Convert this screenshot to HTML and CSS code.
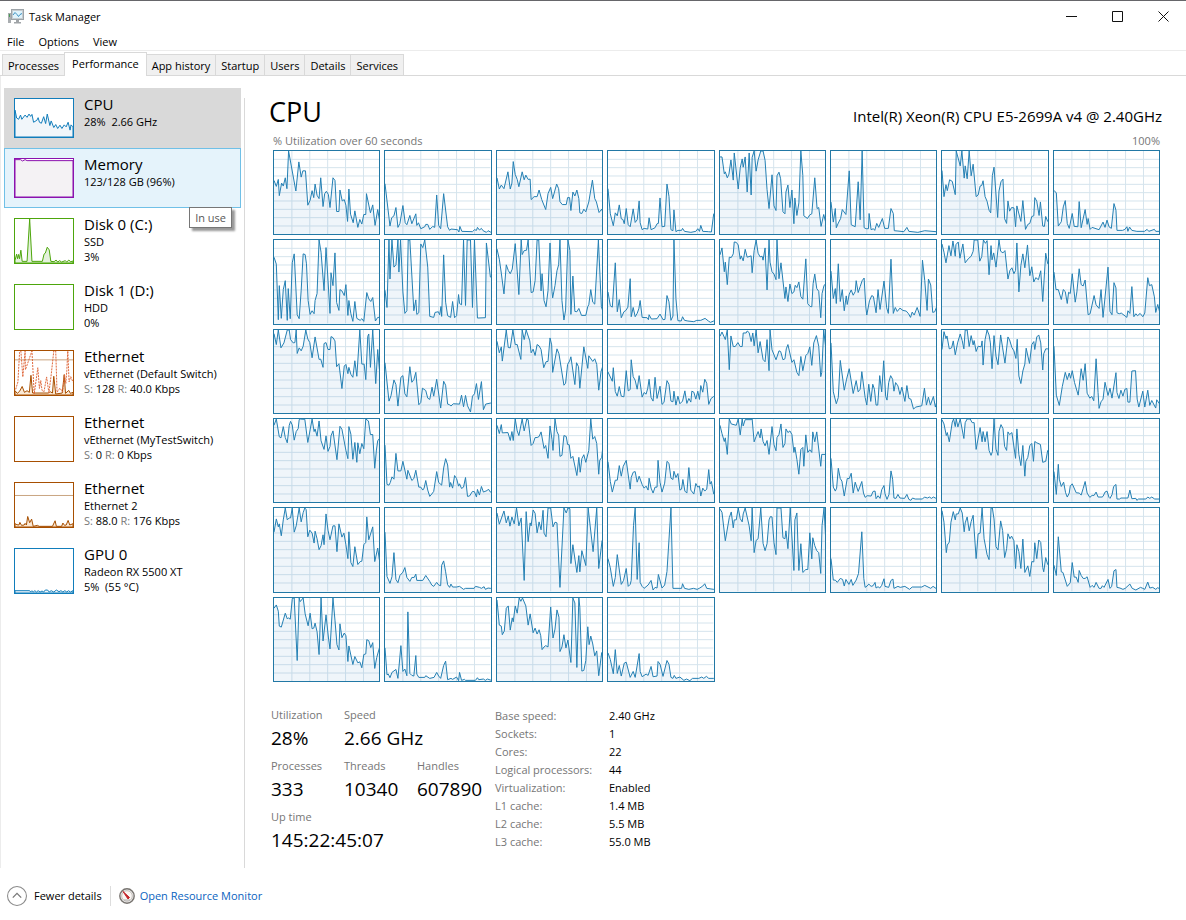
FILE: index.html
```html
<!DOCTYPE html>
<html lang="en">
<head>
<meta charset="utf-8">
<title>Task Manager</title>
<link rel="stylesheet" href="styles.css">
</head>
<body>
<div class="window">
  <header class="titlebar">
    <svg class="app-icon" viewBox="0 0 16 15" aria-hidden="true">
      <rect x="0" y="4" width="3" height="10" fill="#a9adb0"/><rect x="1" y="5" width="1" height="3" fill="#4c9a58"/>
      <rect x="3.5" y=".5" width="12" height="10" fill="#c7ccd0" stroke="#9ca3a8"/>
      <rect x="5" y="2" width="9" height="7" fill="#dff3fc"/>
      <path d="M5 6l2-2.500 2 2 1.500 2L12 5.500l2-1" fill="none" stroke="#3b8fc0"/>
      <path d="M8 11h3v2h2v1.500H6V13h2z" fill="#a0a4a7"/>
    </svg>
    <h1 class="app-title">Task Manager</h1>
    <div class="window-buttons">
      <button class="window-button" aria-label="Minimize"><svg viewBox="0 0 11 11"><path d="M0 5.500h11"/></svg></button>
      <button class="window-button" aria-label="Maximize"><svg viewBox="0 0 11 11"><path d="M.5.5h10v10H.5z"/></svg></button>
      <button class="window-button" aria-label="Close"><svg viewBox="0 0 11 11"><path d="M.5.5l10 10M10.500.5l-10 10"/></svg></button>
    </div>
  </header>
  <nav class="menubar" aria-label="Menu">
    <button class="menu">File</button><button class="menu">Options</button><button class="menu">View</button>
  </nav>
  <div class="tabs" role="tablist">
    <button class="tab" role="tab">Processes</button>
    <button class="tab tab-active" role="tab" aria-selected="true">Performance</button>
    <button class="tab" role="tab">App history</button>
    <button class="tab" role="tab">Startup</button>
    <button class="tab" role="tab">Users</button>
    <button class="tab" role="tab">Details</button>
    <button class="tab" role="tab">Services</button>
  </div>
  <div class="content">
    <nav class="sidebar" aria-label="Resources">
      <button class="resource resource-selected">
        <svg class="thumb cpu" viewBox="43 41 178 116" preserveAspectRatio="none"><path class="area" d="M43 157V75L48 99 54 103 60 90 64 103 74 90 80 97 86 87 91 94 95 88 100 112 110 106 114 98 118 112 124 115 131 95 137 116 142 87 150 122 154 108 162 128 168 119 174 131 181 121 187 131 194 120 200 126 206 112 212 136 215 120 221 126V157Z"/></svg>
        <span class="resource-text"><span class="resource-name">CPU</span><span class="resource-line">28%&nbsp; 2.66 GHz</span></span>
      </button>
      <button class="resource resource-hover">
        <svg class="thumb memory" viewBox="43 221 178 116" preserveAspectRatio="none"><path class="area" d="M43 337V223H60L66 227 74 223 80 226H221V337Z"/></svg>
        <span class="resource-text"><span class="resource-name">Memory</span><span class="resource-line">123/128 GB (96%)</span></span>
        <span class="tooltip" role="tooltip">In use</span>
      </button>
      <button class="resource">
        <svg class="thumb tall disk" viewBox="43 401 178 134" preserveAspectRatio="none"><path class="area" d="M43 535V527L48 508 51 522 54 509 57 522 61 496 65 530H80L88 401 95 530H127L132 508 136 505 142 487 148 495 153 530 163 531 169 526 174 532 180 528 186 532 197 528 202 532 208 526 214 531 221 529V535Z"/></svg>
        <span class="resource-text"><span class="resource-name">Disk 0 (C:)</span><span class="resource-line">SSD</span><span class="resource-line">3%</span></span>
      </button>
      <button class="resource">
        <svg class="thumb tall disk" viewBox="0 0 60 46"></svg>
        <span class="resource-text"><span class="resource-name">Disk 1 (D:)</span><span class="resource-line">HDD</span><span class="resource-line">0%</span></span>
      </button>
      <button class="resource">
        <svg class="thumb tall net" viewBox="43 31 178 134" preserveAspectRatio="none"><path class="limit" d="M43 58H221"/><path class="area" d="M43 165V152L50 160 57 154 65 139 72 157 80 152 87 157 92 105 97 159H145L151 155 158 159 162 108 168 162 188 159 194 103 198 160 208 151 213 160 221 157V165Z"/><path class="dotted" d="M45 148L52 125 57 35 61 31 67 110 74 31 75 88 95 31 102 162 113 82 118 145 122 121 126 151 132 155 140 110 147 158 154 104 162 31 168 31 172 157 181 144 189 156 195 103 199 130 202 90 205 31 209 125 214 109 221 126"/></svg>
        <span class="resource-text"><span class="resource-name">Ethernet</span><span class="resource-line">vEthernet (Default Switch)</span><span class="resource-line"><i>S:</i> 128 <i>R:</i> 40.0 Kbps</span></span>
      </button>
      <button class="resource">
        <svg class="thumb tall net" viewBox="0 0 60 46"></svg>
        <span class="resource-text"><span class="resource-name">Ethernet</span><span class="resource-line">vEthernet (MyTestSwitch)</span><span class="resource-line"><i>S:</i> 0 <i>R:</i> 0 Kbps</span></span>
      </button>
      <button class="resource">
        <svg class="thumb tall net" viewBox="43 428 178 134" preserveAspectRatio="none"><path class="limit" d="M43 466H221"/><path class="area" d="M43 562V552L49 555 55 556 58 548 63 557 71 556 74 551 78 556 82 530 88 549 94 538 99 560 112 557 117 560H158L166 543 170 560 186 560 190 550 195 557 200 556 206 542 211 556 221 552V562Z"/></svg>
        <span class="resource-text"><span class="resource-name">Ethernet</span><span class="resource-line">Ethernet 2</span><span class="resource-line"><i>S:</i> 88.0 <i>R:</i> 176 Kbps</span></span>
      </button>
      <button class="resource">
        <svg class="thumb tall gpu" viewBox="43 626 178 134" preserveAspectRatio="none"><path class="area" d="M43 760V753H88L91 757 95 753 99 757 104 753 109 757 114 753 120 757 126 754 131 757 136 751 143 751 148 757 154 753 162 757 170 751 178 756 184 753 190 757 196 753 202 757 207 753 213 757 221 753V760Z"/></svg>
        <span class="resource-text"><span class="resource-name">GPU 0</span><span class="resource-line">Radeon RX 5500 XT</span><span class="resource-line">5%&nbsp; (55 °C)</span></span>
      </button>
    </nav>
    <main class="panel">
      <div class="panel-head"><h2 class="panel-title">CPU</h2><span class="cpu-model">Intel(R) Xeon(R) CPU E5-2699A v4 @ 2.40GHz</span></div>
      <div class="chart-caption"><span>% Utilization over 60 seconds</span><span>100%</span></div>
      <div class="chart-grid" id="charts"></div>
      <div class="stats">
        <dl class="live">
          <div><dt>Utilization</dt><dd>28%</dd></div>
          <div class="wide"><dt>Speed</dt><dd>2.66 GHz</dd></div>
          <div><dt>Processes</dt><dd>333</dd></div>
          <div><dt>Threads</dt><dd>10340</dd></div>
          <div><dt>Handles</dt><dd>607890</dd></div>
          <div class="full"><dt>Up time</dt><dd>145:22:45:07</dd></div>
        </dl>
        <table class="specs">
          <tr><th scope="row">Base speed:</th><td>2.40 GHz</td></tr>
          <tr><th scope="row">Sockets:</th><td>1</td></tr>
          <tr><th scope="row">Cores:</th><td>22</td></tr>
          <tr><th scope="row">Logical processors:</th><td>44</td></tr>
          <tr><th scope="row">Virtualization:</th><td>Enabled</td></tr>
          <tr><th scope="row">L1 cache:</th><td>1.4 MB</td></tr>
          <tr><th scope="row">L2 cache:</th><td>5.5 MB</td></tr>
          <tr><th scope="row">L3 cache:</th><td>55.0 MB</td></tr>
        </table>
      </div>
    </main>
  </div>
  <footer class="footer">
    <button class="fewer">
      <svg viewBox="0 0 19 19" aria-hidden="true"><circle cx="9.500" cy="9.500" r="9" fill="none" stroke="#8a8a8a"/><path d="M5.500 11l4-4 4 4" fill="none" stroke="#777" stroke-width="1.200"/></svg>
      Fewer details
    </button>
    <a class="monitor" href="#">
      <svg viewBox="0 0 16 16" aria-hidden="true"><circle cx="8" cy="8" r="7.200" fill="#eee" stroke="#77736f" stroke-width="1.400"/><circle cx="8" cy="8" r="5.300" fill="#faf7f5" stroke="#b9b2ad" stroke-width=".8"/><path d="M4 3.500l6.500 6-1.500 1.500z" fill="#c3252b" stroke="#c3252b"/><path d="M5 12h6" stroke="#aaa"/></svg>
      Open Resource Monitor
    </a>
  </footer>
</div>
<script src="charts.js"></script>
</body>
</html>
```

FILE: styles.css
```css
* { box-sizing: border-box; }
body { margin: 0; background: #fff; color: #000; font: 11px/15px "Open Sans", "Noto Sans", sans-serif; }
button { font: inherit; color: inherit; background: none; border: 0; padding: 0; margin: 0; text-align: left; }
h1, h2, dl, dd { margin: 0; font-weight: 400; }
i { font-style: normal; color: #777; }

.window { height: 100vh; min-height: 700px; display: flex; flex-direction: column; border-top: 1px solid #66666a; }
.titlebar { display: flex; align-items: center; height: 30px; padding-left: 8px; }
.app-icon { width: 16px; height: 15px; margin-right: 5px; }
.app-title { font-size: 11px; }
.window-buttons { margin-left: auto; display: flex; }
.window-button { width: 46px; height: 28px; display: flex; align-items: center; justify-content: center; }
.window-button svg { width: 11px; height: 11px; fill: none; stroke: #111; }
.menubar { display: flex; gap: 14px; height: 20px; padding: 1px 7px 0; border-bottom: 1px solid #ececec; }
.tabs { display: flex; align-items: flex-end; height: 25px; padding-left: 2px; border-bottom: 1px solid #d9d9d9; }
.tab { height: 21px; padding: 0 5px; background: #f0f0f0; border: 1px solid #d9d9d9; border-left-width: 0; border-bottom: 0; white-space: nowrap; }
.tab:first-child { border-left-width: 1px; border-right: 0; }
.tab-active { height: 24px; margin-bottom: -1px; padding: 0 7px 3px; background: #fff; border-left-width: 1px; }

.content { flex: 1; min-height: 0; display: flex; border-left: 1px solid #ececec; }
.sidebar { flex: 0 0 243px; padding: 12px 3px 0; display: flex; flex-direction: column; }
.resource { position: relative; flex: none; display: flex; align-items: flex-start; gap: 10px; min-height: 60px; padding: 9px 0 3px 9px; border: 1px solid transparent; }
.resource-selected { background: #d9d9d9; }
.resource-hover { background: #e5f3fb; border-color: #70c0e7; }
.thumb { width: 60px; height: 40px; flex: none; background: #fff; border: 1px solid #117dbb; overflow: hidden; }
.thumb.tall { height: 46px; margin-bottom: 6px; }
.thumb path { stroke-width: 1px; vector-effect: non-scaling-stroke; fill: none; }
.cpu .area, .gpu .area { stroke: #117dbb; fill: #f1f6fa; }
.memory { border-color: #8b12ae; }
.memory .area { stroke: #8b12ae; fill: #f4f2f4; }
.disk { border-color: #4da60c; }
.disk .area { stroke: #4da60c; fill: #e4f1dc; }
.net { border-color: #a74f01; }
.net .area { stroke: #a74f01; fill: #fbe9d5; }
.net .limit { stroke: #c9a581; }
.net .dotted { stroke: #e0683c; stroke-dasharray: 2 1; }
.resource-text { display: flex; flex-direction: column; white-space: nowrap; }
.resource-name { font-size: 15px; line-height: 16px; margin: -2px 0 2px; }
.tooltip { position: absolute; z-index: 1; right: 8px; top: 58px; padding: 2px 5px; border: 1px solid #767676; background: #fff; color: #575757; box-shadow: 3px 3px 2px #999; }

.panel { flex: 1; min-width: 0; display: flex; flex-direction: column; margin-top: 22px; padding: 0 26px 0 28px; border-left: 1px solid #d9d9d9; }
.panel-head { display: flex; justify-content: space-between; align-items: baseline; margin: -5px -2px 0 -4px; white-space: nowrap; }
.panel-title { font-size: 27px; line-height: 38px; }
.cpu-model { font-size: 15px; }
.chart-caption { display: flex; justify-content: space-between; margin: 2px 0; color: #767676; }
.chart-grid { flex: 1; min-height: 0; display: grid; grid-template-columns: repeat(8, minmax(0, 1fr)); grid-template-rows: repeat(6, minmax(0, 1fr)); gap: 4px; }
.chart { width: 100%; height: 100%; display: block; border: 1px solid #2278a5; }
.chart path { vector-effect: non-scaling-stroke; fill: none; stroke-width: 1px; }
.chart .rule { stroke: #d5e4ed; }
.chart .load { stroke: #2480b4; fill: rgba(17, 110, 187, .065); }

.stats { display: flex; flex: none; gap: 14px; padding-top: 23px; min-height: 186px; }
.live { width: 210px; margin-left: -2px; display: grid; grid-template-columns: 73px 73px 1fr; grid-auto-rows: 51px; align-content: start; white-space: nowrap; }
.wide { grid-column: span 2; }
.full { grid-column: span 3; }
.live dt { line-height: 20px; color: #767676; }
.live dd { font-size: 19px; line-height: 26px; }
.specs { border-collapse: collapse; align-self: flex-start; white-space: nowrap; margin-top: 1px; }
.specs th, .specs td { padding: 0; height: 18px; font-weight: 400; text-align: left; }
.specs th { width: 114px; color: #767676; }

.footer { flex: none; display: flex; align-items: center; height: 52px; padding: 3px 7px 0; }
.fewer { display: flex; align-items: center; gap: 7px; padding-right: 8px; border-right: 1px solid #ddd; white-space: nowrap; }
.fewer svg { width: 20px; height: 20px; }
.monitor { display: flex; align-items: center; gap: 5px; margin-left: 8px; color: #0a63c0; text-decoration: none; white-space: nowrap; }
.monitor svg { width: 16px; height: 16px; }
```

FILE: charts.js
```js
// One entry per logical processor: left edge, top edge, load trace (318 x 252 units).
const processors = [
  [25,181,"25,270 32,288 38,267 41,316 48,278 53,287 59,262 64,295 69,181 91,302 100,214 107,260 112,241 120,241 127,345 134,330 140,301 145,322 149,281 155,315 161,325 166,262 173,349 178,310 183,303 189,312 194,352 203,262 209,270 214,364 221,364 224,299 231,332 237,328 242,345 247,394 251,296 256,372 264,398 269,362 278,412 284,388 290,402 296,373 302,373 304,310 316,368 323,344 330,406 338,358 343,388"],
  [359,181,"359,280 374,408 379,383 386,377 392,352 398,412 404,400 413,346 420,398 425,404 434,376 440,401 452,371 455,406 460,398 467,416 479,410 482,403 488,403 494,418 503,409 509,412 515,314 521,406 527,416 536,310 548,410 554,421 558,417 578,419 582,426 585,409 591,424 623,425 629,419 635,421 638,412 644,420 650,415 655,422 665,427 670,422 677,426"],
  [691,181,"691,262 698,296 704,284 712,295 724,244 731,296 736,278 740,213 746,252 752,267 757,289 767,244 773,268 778,254 785,267 791,266 794,328 803,319 812,319 818,299 826,328 838,358 845,310 853,291 859,325 871,281 877,295 881,334 888,343 900,343 904,322 910,322 914,361 920,305 926,317 932,299 938,325 941,368 947,370 953,357 959,365 968,335 979,269 986,325 991,335 999,367 1007,357 1012,370"],
  [127,46,"127,160 134,236 143,272 149,233 155,242 161,209 167,251 172,253 176,266 182,220 188,269 194,275 203,221 209,262 215,254 221,197 224,263 230,284 236,280 247,282 251,248 257,284 269,278 275,266 279,265 284,188 290,275 298,274 305,146 311,183 317,284 323,287 326,224 332,290 338,286 349,286 352,280 358,289 377,292 392,289 398,281 403,289 407,271 413,289 430,290 439,291 446,236"],
  [460,46,"460,64 466,64 473,115 476,109 482,127 487,116 493,73 500,134 503,52 515,161 521,97 527,70 530,95 536,64 542,170 548,52 554,179 557,65 563,46 569,107 575,73 583,46 590,46 596,74 602,163 608,220 617,118 623,212 629,226 632,121 638,110 643,130 650,230 656,236 659,170 665,149 671,217 677,164 683,266 686,188 692,241 698,203 704,46 710,120 713,242 724,250 731,239 737,236 746,127 753,220 758,217 765,274 773,238 779,262"],
  [793,46,"793,200 800,261 806,220 809,278 815,264 822,250 827,223 838,238 848,106 854,269 866,275 875,139 881,254 887,46 893,278 899,281 906,281 908,235 914,284 921,281 925,286 931,265 937,277 948,250 955,280 966,280 974,220 981,235 984,287 995,288 1013,290 1022,277 1028,289 1055,292 1076,287 1110,290"],
  [244,181,"244,240 250,319 256,283 260,301 267,268 275,273 284,313 287,181 299,226 304,181 311,263 314,226 320,265 326,181 332,256 338,221 347,319 353,314 359,287 364,285 368,271 374,319 380,333 386,360 391,368 396,255 401,230 412,382 416,302 422,274 428,266 433,386 439,400 443,332 448,363 454,352 461,353 466,410 470,347 482,394 488,331 496,418 503,403 509,400 515,379 521,377 524,322 530,333 537,376 541,335 548,408 553,409 557,379 563,394"],
  [577,181,"577,300 584,308 590,408 599,395 605,350 611,331 617,400 623,415 632,370 638,409 649,410 653,334 659,413 671,358 677,403 680,385 686,418 692,412 713,419 725,396 731,412 737,390 743,410 750,415 758,340 764,360 767,421 784,421 791,418 797,410 800,424 805,411 812,421 827,424 850,424 858,418 863,424 880,418 884,424 899,424"],
  [25,448,"25,500 32,521 38,689 41,586 47,685 53,598 59,571 65,691 68,595 74,686 80,517 86,490 95,674 101,686 107,600 113,490 119,492 123,520 128,631 134,673 140,662 146,671 149,631 155,610 161,448 167,485 176,601 182,471 194,670 197,547 203,586 209,487 214,637 221,661 224,598 230,602 237,616 242,583 248,676 251,631 257,671 263,694 269,634 275,685 285,691 290,686 296,694 305,607 311,626 317,634 323,622 331,693 338,682 343,682"],
  [359,448,"359,600 365,652 371,448 374,566 380,448 386,530 392,523 398,448 401,545 406,448 413,605 419,670 425,662 429,448 434,448 446,662 452,629 455,673 461,668 467,460 473,471 479,448 488,530 494,679 506,682 510,667 520,665 524,674 528,649 530,679 536,493 542,636 548,677 557,682 563,634 569,683 575,677 581,613 584,640 590,644 596,448 602,646 607,448 617,448 623,652 629,448 638,684 662,683 665,457 677,560"],
  [691,448,"691,475 698,506 704,548 712,611 719,523 725,540 731,550 737,536 746,459 757,613 764,448 767,492 773,480 780,479 785,448 794,607 800,605 806,571 812,448 817,448 824,602 827,550 833,631 839,650 845,601 851,457 857,604 859,623 866,586 872,541 877,523 881,448 887,631 893,690 898,660 905,448 911,480 914,673 920,557 926,664 932,665 938,655 946,676 959,676 965,649 968,644 974,598 980,636 986,642 997,448 1006,650 1012,668"],
  [127,313,"127,470 134,512 140,516 149,382 155,530 161,493 167,548 175,530 181,526 187,516 194,430 197,545 203,517 209,545 215,535 220,521 224,496 230,547 245,548 249,554 251,539 258,552 275,551 284,537 293,554 299,553 305,481 311,500 317,556 323,543 326,313 332,490 338,557 348,558 352,545 358,556 368,558 386,560 395,556 407,556 420,550 430,558 436,562 446,558"],
  [460,313,"460,358 466,337 473,409 476,380 482,448 488,365 494,366 500,355 503,319 509,320 515,328 521,371 524,361 530,376 536,341 542,365 554,361 557,412 563,345 569,313 575,353 581,364 587,362 590,374 596,337 602,464 608,313 611,380 617,409 623,416 629,433 632,313 638,430 644,382 656,490 659,455 665,499 671,446 677,475 683,470 687,450 692,457 698,440 704,484 710,492 719,370 725,506 732,514 737,515 741,445 746,416 752,460 758,468 764,548 768,475 774,450 779,446"],
  [793,313,"793,407 800,490 806,460 809,505 815,385 821,499 827,463 833,527 839,482 842,508 848,477 854,464 860,480 866,469 869,436 875,472 881,454 887,436 893,428 898,515 901,540 909,497 916,481 921,484 929,533 935,463 941,523 953,437 961,518 966,535 974,371 981,535 987,517 993,529 1001,519 1010,526 1020,528 1027,536 1033,547 1038,531 1044,540 1053,517 1062,544 1069,374 1076,436 1083,526 1087,431 1094,449 1100,532 1106,530 1113,512"],
  [244,448,"244,460 250,485 256,517 265,465 271,496 277,451 284,497 286,462 293,454 298,503 307,460 314,517 323,505 332,497 338,482 341,448 352,448 358,512 364,498 369,448 375,458 380,450 386,553 392,465 395,508 400,487 407,530 416,448 421,482 428,487 434,480 443,566 449,540 455,532 461,550 466,540 470,457 476,605 482,525 488,490 494,532 502,463 509,556 515,529 521,575 527,562 535,568 542,541 548,634 557,488 563,520"],
  [577,448,"577,545 583,598 590,598 599,628 605,598 611,604 617,640 621,606 626,610 632,550 641,636 646,605 653,535 659,583 665,587 671,569 680,674 686,671 698,616 704,644 713,655 719,598 725,682 740,530 746,664 752,674 758,577 764,593 767,668 774,671 780,669 797,682 800,662 806,670 812,589 818,680 824,671 829,677 837,670 845,680 851,669 860,562 865,586 872,583 880,620 884,667 890,643 896,666 899,658"],
  [25,11,"25,22 32,55 38,11 46,65 55,50 65,11 71,11 75,40 83,50 88,49 92,11 95,82 101,65 107,74 113,60 121,11 127,38 133,49 140,95 149,32 161,100 166,99 173,124 176,52 182,49 188,70 194,70 197,31 203,34 209,44 214,122 221,113 230,188 237,120 242,115 248,143 251,124 257,145 263,154 269,104 275,151 284,11 290,114 297,114 302,161 308,30 311,23 316,124 323,11 332,173 338,70 343,130"],
  [359,11,"359,110 371,226 377,210 386,162 392,176 398,241 407,154 413,149 419,204 425,213 434,122 440,169 446,161 452,139 461,237 467,230 472,187 482,194 488,217 494,221 501,184 506,211 515,160 527,247 536,166 542,178 548,235 554,237 558,241 565,234 584,235 590,208 596,243 602,209 608,240 617,259 623,211 629,204 635,173 641,221 650,167 656,252 663,235 677,232"],
  [691,11,"691,45 698,80 704,62 707,105 719,11 725,64 731,65 739,11 746,55 752,55 763,100 767,11 773,40 779,11 790,44 794,80 800,69 806,88 812,55 818,59 824,70 832,125 839,107 845,106 851,35 856,56 859,139 872,68 878,83 893,178 898,172 904,115 910,105 914,92 926,176 931,110 937,122 941,187 953,62 965,127 968,89 980,106 986,98 992,115 998,193 1005,136 1012,115"],
  [127,11,"127,138 140,166 143,125 149,197 155,211 161,182 167,211 175,213 182,134 188,195 194,191 197,101 203,152 209,163 215,190 221,149 230,214 236,200 242,205 247,187 251,160 257,215 263,226 269,154 275,218 284,181 290,236 296,230 305,164 311,175 317,226 323,228 326,196 332,238 338,211 344,234 352,226 359,195 365,233 371,218 377,229 380,196 386,199 392,220 398,196 403,221 407,179 413,199 419,160 425,172 431,236 438,218 446,212"],
  [460,11,"460,30 466,17 476,40 482,11 488,131 493,29 500,61 506,61 514,49 521,61 527,61 530,20 539,20 542,14 548,19 554,46 559,20 563,59 569,11 575,80 581,46 590,100 596,107 602,40 608,134 611,11 617,71 629,101 638,74 643,76 650,101 656,98 660,68 665,55 677,109 683,101 692,139 698,149 704,91 710,134 719,88 725,82 731,62 737,118 743,50 751,28 758,60 764,152 767,140 773,11 779,65"],
  [-92,11,"-92,50 -85,198 -76,234 -70,215 -64,103 -52,193 -45,160 -37,128 -25,203 -16,164 -10,198 -4,190 1,137 11,215 16,238 22,175 28,227 34,175 39,190 44,238 49,238 55,149 61,198 67,104 73,212 77,223 82,170 88,149 94,160 98,196 103,170 110,180 116,206 122,184 131,227 137,179 143,218 149,220 157,250 164,244 182,240 190,187 196,238 202,214 208,238 217,212 223,244 229,221"],
  [244,11,"244,70 250,16 256,37 259,29 266,68 273,65 278,44 284,86 291,50 299,23 305,43 310,68 314,11 320,11 326,61 332,28 338,56 341,43 347,76 353,60 362,62 365,44 368,117 374,40 380,11 386,26 390,50 395,128 401,28 407,90 413,116 421,26 427,65 434,111 443,32 448,41 455,64 461,74 467,97 471,39 476,150 482,173 488,135 494,114 498,66 508,112 515,55 521,46 524,70 530,32 536,26 542,50 548,132 551,83 557,68 563,68"],
  [577,11,"577,60 584,208 593,239 602,182 611,139 617,161 623,141 627,157 632,134 639,170 650,208 659,128 665,163 671,113 677,202 685,217 691,212 697,225 704,98 710,200 713,248 719,228 725,220 731,169 740,209 746,187 752,217 764,140 767,200 773,218 779,193 785,211 791,190 797,188 800,229 806,229 812,135 823,134 828,220 833,244 845,196 851,244 860,193 866,239 872,224 884,247 887,222 898,238"],
  [25,281,"25,300 32,281 41,335 46,338 53,304 59,337 65,353 71,300 75,288 80,299 86,345 92,319 98,310 101,283 104,281 118,282 127,352 134,314 140,281 146,319 149,311 155,333 161,287 167,347 176,373 182,332 188,379 194,364 197,332 203,317 215,404 224,303 230,312 242,376 248,401 251,304 257,327 263,403 269,352 275,412 278,353 284,386 290,355 296,371 302,281 310,287 316,328 323,328 329,430 334,375 338,347 343,340"],
  [359,281,"359,360 365,479 371,481 375,473 380,456 386,463 392,385 398,438 407,438 413,409 425,463 428,436 440,467 446,461 452,436 461,487 467,487 473,496 477,490 482,467 488,496 494,515 500,508 506,500 515,440 521,473 530,481 536,429 542,401 548,420 554,487 557,473 563,490 569,452 575,461 581,484 584,477 590,491 596,487 602,458 608,515 614,514 623,500 629,501 635,517 638,494 644,511 650,485 656,502 668,497 671,493 677,502"],
  [691,281,"691,300 698,325 704,298 707,323 724,322 731,346 736,319 740,346 746,281 752,317 757,331 767,281 773,317 781,281 785,283 794,361 800,355 806,337 812,337 818,334 824,320 833,370 838,361 845,400 851,302 857,343 860,376 866,281 872,319 877,330 881,394 887,391 893,331 900,334 904,358 909,359 914,400 920,394 932,452 938,397 942,442 947,401 953,389 959,412 968,376 974,281 980,342 986,334 992,355 998,448 1001,406 1007,397 1012,350"],
  [127,281,"127,410 134,470 140,502 149,466 155,466 161,422 167,454 173,424 182,406 194,493 197,458 203,442 209,440 215,472 221,454 230,479 236,490 242,484 248,496 251,460 257,490 263,505 269,487 275,487 278,406 284,472 290,502 298,475 305,409 311,415 317,460 323,464 326,439 332,458 338,446 344,496 349,493 353,464 359,499 365,505 371,428 377,496 386,508 392,476 398,487 403,484 407,514 413,490 419,499 425,493 431,434 435,478 439,470 446,508"],
  [460,281,"460,300 466,325 473,349 476,338 482,388 488,281 494,296 509,300 515,281 521,329 527,281 530,302 536,283 554,283 557,281 563,350 569,334 575,319 581,338 584,311 590,349 596,362 602,346 608,388 617,304 623,359 629,377 632,337 638,328 644,296 650,367 656,355 659,311 665,322 671,317 677,328 683,382 686,366 692,403 698,448 704,373 710,367 713,424 719,329 725,382 731,374 737,382 740,320 746,350 752,320 764,424 767,388 779,388"],
  [-92,281,"-92,400 -85,487 -79,499 -75,490 -70,430 -64,461 -59,469 -52,514 -43,461 -37,461 -31,445 -25,505 -19,472 -10,500 1,470 6,505 11,518 17,513 29,514 35,500 41,499 44,522 50,513 56,521 61,495 68,482 71,507 77,524 83,509 89,438 94,463 98,520 104,521 110,509 116,520 130,521 137,509 143,524 149,527 154,520 162,523 184,523 190,517 199,520 205,517 211,521 217,517 223,520 229,523"],
  [244,281,"244,283 250,296 257,331 260,322 266,350 275,290 279,281 284,304 287,281 292,305 299,281 310,340 314,292 320,281 329,281 335,292 341,292 347,373 359,307 365,350 368,319 374,350 380,319 386,376 392,391 396,380 401,281 407,372 413,391 416,318 422,298 428,310 433,364 439,376 443,320 448,328 455,322 466,400 470,311 476,388 482,422 488,361 494,454 497,409 503,397 509,361 515,355 520,409 524,349 530,353 541,358 548,412 557,409 563,376"],
  [577,281,"577,440 584,509 590,418 593,463 599,485 606,472 612,504 617,517 623,505 626,484 632,477 644,504 653,505 659,511 665,491 671,470 677,505 685,518 692,512 698,512 704,502 710,517 722,517 725,515 731,502 737,499 743,518 746,521 752,510 757,485 764,479 767,523 775,523 779,520 800,520 806,496 812,522 824,521 827,527 832,523 854,523 860,517 866,521 872,517 881,523 898,523"],
  [25,547,"25,620 32,580 38,604 41,595 47,631 53,583 59,547 65,583 71,577 75,577 80,547 86,620 92,601 101,547 107,589 113,561 118,547 122,552 127,634 133,614 140,623 146,653 149,617 155,640 161,673 167,661 173,628 176,658 182,565 188,614 194,643 203,601 209,601 215,679 221,595 230,635 236,623 242,658 248,700 251,619 257,712 263,724 269,664 278,718 285,709 290,708 296,658 302,651 305,574 311,643 323,604 329,709 338,668 343,704"],
  [359,547,"359,620 365,754 374,775 380,755 386,682 392,763 398,773 404,751 413,741 419,727 425,757 434,769 440,757 447,757 452,747 455,766 473,766 482,751 494,769 500,780 506,784 515,772 521,780 527,782 530,720 536,707 542,740 548,779 554,787 558,777 563,786 575,786 584,784 596,793 602,790 628,790 632,784 644,787 650,790 658,785 662,793 670,789 677,790"],
  [691,547,"691,562 698,596 712,556 719,592 725,571 730,602 736,574 743,595 750,547 757,601 764,577 773,766 779,558 785,649 791,592 794,601 800,553 806,563 812,622 818,589 824,613 830,554 833,623 839,634 845,547 853,547 860,604 866,590 872,592 881,787 893,547 900,562 905,547 911,549 914,715 920,658 932,742 938,691 941,740 947,676 959,721 966,547 981,679 992,547 998,730 1008,646 1012,655"],
  [127,547,"127,700 134,728 143,784 149,757 155,688 167,778 174,766 182,730 188,784 194,778 197,766 204,600 209,547 215,763 221,652 224,772 230,784 236,790 248,780 257,766 263,795 269,787 275,789 279,748 290,789 298,780 305,739 317,547 323,790 349,790 352,776 358,790 371,793 385,790 396,793 404,789 413,783 419,776 425,790 446,793"],
  [460,547,"460,550 466,560 476,646 488,576 494,559 500,607 503,583 509,583 515,547 521,579 527,589 530,565 536,547 548,601 554,646 557,547 563,682 569,645 575,640 583,547 590,654 596,676 602,655 608,583 612,573 617,574 623,652 629,688 632,547 644,547 650,637 656,640 659,616 665,670 672,547 683,736 686,583 692,562 698,736 704,655 710,742 719,733 725,733 731,622 737,701 740,637 746,661 752,676 758,682 764,745 768,600 774,547 779,642"],
  [-92,547,"-92,700 -85,765 -79,765 -73,772 -64,760 -57,763 -52,783 -47,763 -38,778 -31,763 -26,781 -16,765 -9,745 1,619 7,760 11,787 17,783 22,777 29,784 35,782 41,772 44,789 50,785 55,789 61,781 68,761 71,784 82,787 89,766 95,762 98,790 110,784 117,787 131,784 145,793 153,786 182,786 191,781 209,790 216,784 229,793"],
  [244,547,"244,555 250,590 257,682 260,659 266,650 271,590 278,558 284,583 287,565 293,565 299,547 305,562 311,619 314,592 320,574 326,616 332,588 338,569 347,700 353,625 359,623 365,547 371,640 380,688 386,703 392,547 396,547 401,580 407,664 413,674 421,586 427,615 433,697 439,670 443,625 449,640 454,632 461,646 466,730 470,658 476,679 482,730 488,641 494,742 503,722 509,754 515,709 521,710 524,652 530,700 536,644 542,651 548,727 551,740 557,697 563,718"],
  [577,547,"577,720 584,751 590,634 599,740 604,742 617,784 626,773 632,712 638,756 644,756 650,772 653,736 659,751 665,760 671,760 677,755 686,787 692,781 698,787 704,772 713,790 719,790 723,782 728,787 740,763 746,790 751,784 758,737 764,733 767,787 776,789 785,793 792,790 806,777 813,790 824,795 838,787 845,790 851,793 860,771 866,789 875,787 884,793 890,788 899,793"],
  [25,19,"25,50 32,40 38,59 41,104 47,107 59,65 65,82 68,79 74,83 80,24 82,19 86,19 95,208 101,19 104,30 113,19 119,67 128,103 134,65 140,112 145,110 149,95 155,121 161,190 167,19 173,149 182,70 189,137 194,173 203,19 209,86 215,160 221,176 224,97 230,139 237,125 242,133 248,211 251,164 263,220 269,196 278,215 284,212 290,230 296,190 302,188 305,145 311,148 317,169 323,154 329,232 335,199 343,170"],
  [359,19,"359,170 365,251 369,249 374,260 380,244 392,235 398,262 407,163 413,241 419,234 425,254 428,61 434,247 440,253 446,255 452,193 455,249 461,259 479,259 482,254 494,262 507,259 515,244 521,255 527,262 536,223 542,210 548,266 558,262 563,265 575,258 581,269 584,244 590,268 599,265 602,268 632,268 638,260 642,266 656,264 662,268 668,264 677,267"],
  [691,19,"691,25 698,101 704,104 707,130 713,119 719,50 725,43 731,116 737,79 740,91 746,43 752,65 758,19 763,29 768,19 778,43 785,101 791,67 800,124 806,110 812,128 818,115 823,133 827,175 833,167 838,163 845,167 853,46 860,140 866,113 872,55 878,77 881,181 887,167 893,130 899,170 905,146 914,214 920,19 926,34 932,229 938,19 941,47 947,240 953,238 959,208 965,106 969,160 974,134 980,158 986,194 992,179 998,254 1007,184 1012,219"],
  [1027,19,"1027,185 1034,205 1043,248 1049,175 1055,247 1061,223 1067,255 1076,216 1082,213 1094,259 1103,241 1109,259 1121,187 1124,241 1130,257 1142,249 1148,253 1157,226 1163,257 1175,255 1178,211 1184,219 1193,256 1205,208 1211,219 1217,259 1223,262 1227,253 1232,262 1244,258 1256,268 1264,264 1274,269 1282,262 1301,262 1310,258 1316,262 1324,256 1331,262 1345,262"]
];

const ruled = (x, y) => {
  let d = "";
  for (let i = 1; i <= 5; i++) d += `M${x + i * 54} ${y}v252`;
  for (let i = 1; i <= 9; i++) d += `M${x} ${y + i * 25.2}h318`;
  return d;
};

document.getElementById("charts").innerHTML = processors.map(([x, y, trace], n) =>
  `<svg class="chart" role="img" aria-label="CPU ${n}" viewBox="${x} ${y} 318 252" preserveAspectRatio="none">
    <path class="rule" d="${ruled(x, y)}"/>
    <path class="load" d="M${x - 6} ${y + 258}L${x - 6},${trace.split(" ")[0].split(",")[1]} ${trace} ${x + 324},${trace.split(",").pop()} ${x + 324},${y + 258}Z"/>
  </svg>`).join("");
```
